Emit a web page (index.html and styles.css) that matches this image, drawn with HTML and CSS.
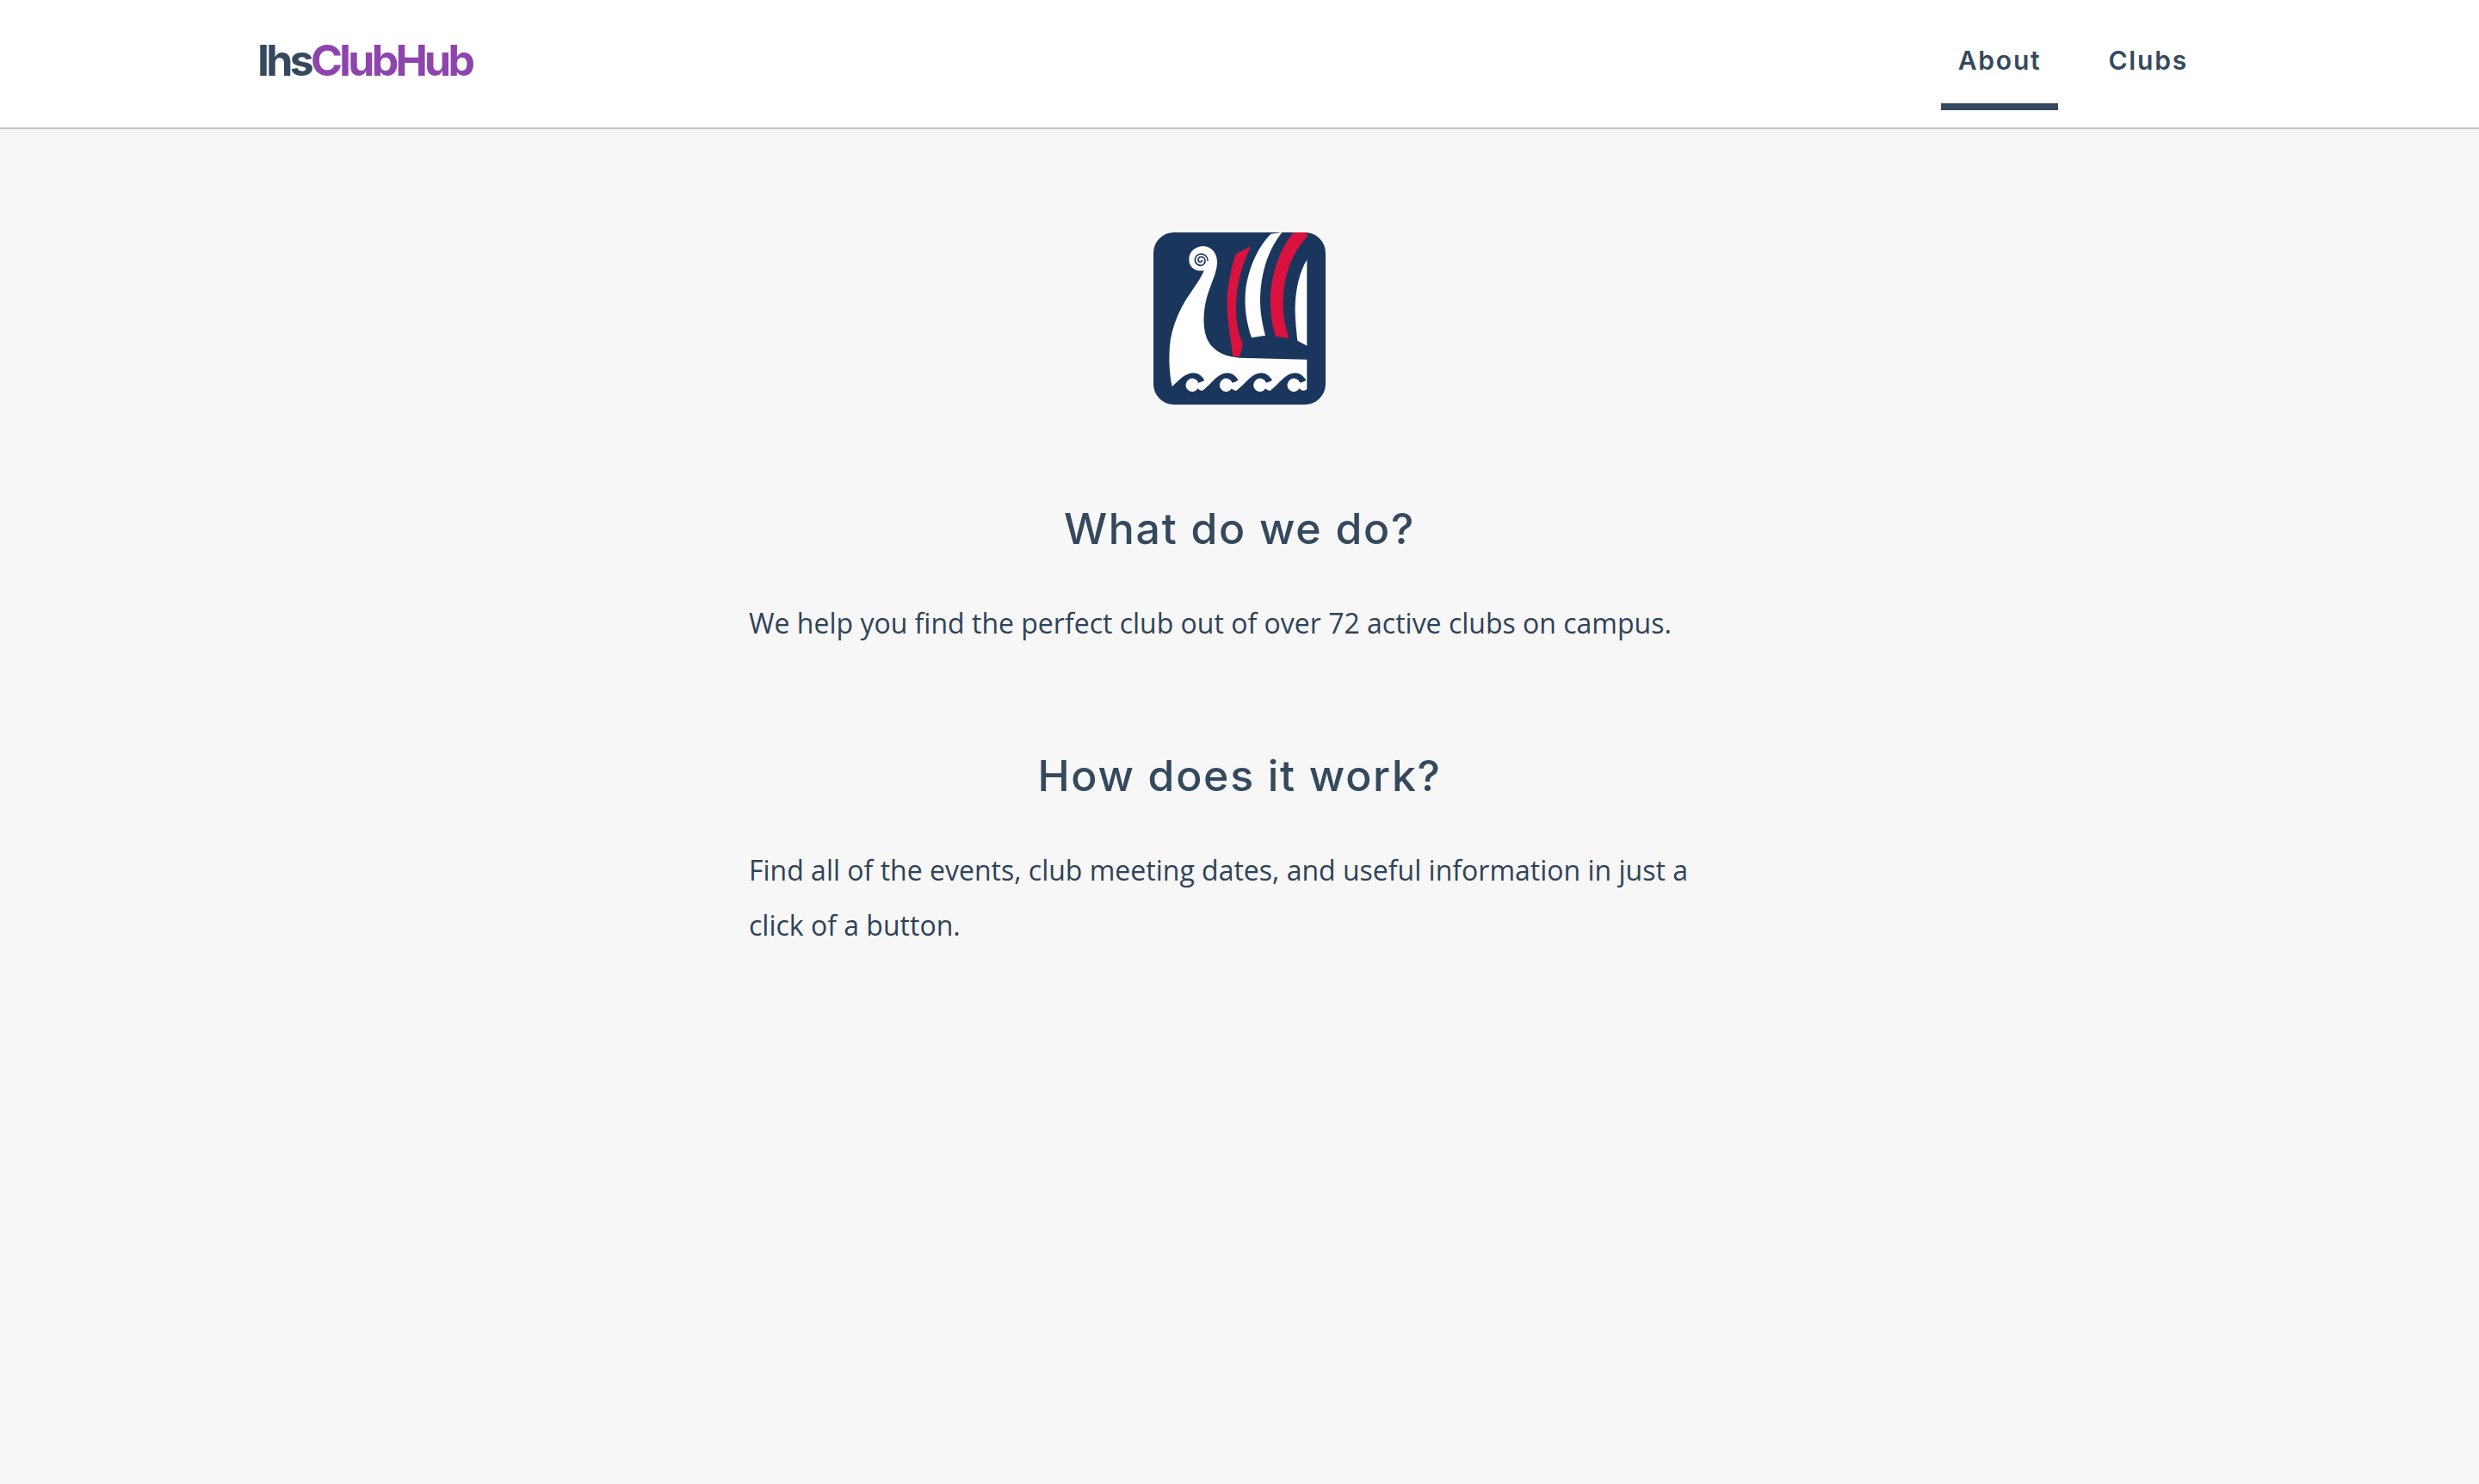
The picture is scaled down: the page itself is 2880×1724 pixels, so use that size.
FILE: index.html
```html
<!DOCTYPE html>
<html lang="en">
<head>
<meta charset="utf-8">
<title>IhsClubHub</title>
<link rel="stylesheet" href="styles.css">
</head>
<body>
<header class="topbar">
  <a class="brand" href="#"><span class="brand-dark">Ihs</span><span class="brand-accent">ClubHub</span></a>
  <nav class="nav">
    <a class="nav-link is-active" href="#">About</a>
    <a class="nav-link" href="#">Clubs</a>
  </nav>
</header>
<main class="content">
  <svg class="crest" viewBox="60 45 600 600" aria-label="Viking ship logo">
    <rect x="60" y="45" width="600" height="600" rx="72" fill="#1a365d"/>
    <path fill="#d9123f" d="M400 94 C378 104 362 112 346 122 C328 180 316 240 317 300 C318 360 330 420 337 478 L360 478 L372 436 C352 390 345 340 349 280 C353 210 372 150 400 94Z"/>
    <path fill="#fff" d="M508 45 L470 50 C428 90 394 160 382 240 C375 300 384 360 402 412 L450 404 C436 350 428 300 434 240 C442 160 468 95 508 45Z"/>
    <path fill="#d9123f" d="M596 45 L548 45 C510 90 480 160 470 240 C464 300 470 360 486 407 L532 414 C514 360 508 310 514 250 C522 170 556 100 596 60Z"/>
    <path fill="#fff" d="M595 140 C570 180 556 240 554 300 C553 340 558 385 562 422 L595 440Z"/>
    <path fill="#fff" d="M125 582 C116 540 113 490 117 440 C122 380 150 310 190 255 C212 222 228 200 236 178 C205 183 184 165 184 140 C184 112 206 93 234 93 C262 93 283 118 282 150 C281 190 258 225 244 280 C234 320 232 370 243 405 C256 450 300 478 360 482 L595 488 L595 592 L586 596
      c -5 1 -11 0 -17 -7 a23 23 0 1 1 2 -20 c 8 -2 15 -5 21 -9
      c -10 -15 -22 -25 -38 -25 c -34 0 -55 38 -86 61
      c -5 1 -11 0 -17 -7 a23 23 0 1 1 2 -20 c 8 -2 15 -5 21 -9
      c -10 -15 -22 -25 -38 -25 c -34 0 -55 38 -86 61
      c -5 1 -11 0 -17 -7 a23 23 0 1 1 2 -20 c 8 -2 15 -5 21 -9
      c -10 -15 -22 -25 -38 -25 c -34 0 -55 38 -86 61
      c -5 1 -11 0 -17 -7 a23 23 0 1 1 2 -20 c 8 -2 15 -5 21 -9
      c -10 -15 -22 -25 -38 -25 c -30 0 -50 25 -75 47Z"/>
    <path fill="none" stroke="#1a365d" stroke-width="5" stroke-linecap="round" d="M249 142 A23 23 0 0 0 225 120 A21 21 0 0 0 205 142 A19 19 0 0 0 225 160 A16 16 0 0 0 240 142 A14 14 0 0 0 225 130 A10 10 0 0 0 216 142 A7 7 0 0 0 225 148 A4 4 0 0 0 229 143"/>
  </svg>
  <section class="block">
    <h2 class="heading">What do we do?</h2>
    <p class="copy">We help you find the perfect club out of over 72 active clubs on campus.</p>
  </section>
  <section class="block">
    <h2 class="heading">How does it work?</h2>
    <p class="copy">Find all of the events, club meeting dates, and useful information in just a click of a button.</p>
  </section>
</main>
</body>
</html>
```
FILE: styles.css
```css
* { box-sizing: border-box; }
html, body { margin: 0; height: 100%; }
body { background: #f7f7f7; color: #34495e; font-family: "Open Sans", sans-serif; }
.topbar { height: 150px; background: #fff; border-bottom: 2px solid #bdc3c7; padding: 0 318px 0 299px; display: flex; align-items: flex-start; justify-content: space-between; }
.brand { margin-top: 42px; font-family: "Inter", sans-serif; font-weight: 700; font-size: 50px; line-height: 56px; letter-spacing: -3.7px; text-decoration: none; }
.brand-dark { color: #34495e; }
.brand-accent { color: #8e44ad; }
.nav { display: flex; gap: 38px; }
.nav-link { display: block; height: 128px; padding: 52px 20px 0; font-family: "Inter", sans-serif; font-weight: 600; font-size: 30px; line-height: 36px; letter-spacing: 1.8px; color: #34495e; text-decoration: none; border-bottom: 8px solid transparent; }
.nav-link.is-active { border-bottom-color: #34495e; }
.content { width: 1144px; margin: 0 auto; padding-top: 120px; display: flex; flex-direction: column; align-items: center; }
.crest { display: block; width: 200px; height: 200px; margin-bottom: 115px; }
.block { width: 100%; margin-bottom: 116px; }
.heading { margin: 0 0 49px; text-align: center; font-family: "Inter", sans-serif; font-weight: 500; font-size: 50px; line-height: 58px; letter-spacing: 1.7px; color: #34495e; }
.copy { margin: 0; padding: 0 6px 0 2px; font-size: 32px; line-height: 64px; color: #2f4358; }
```
